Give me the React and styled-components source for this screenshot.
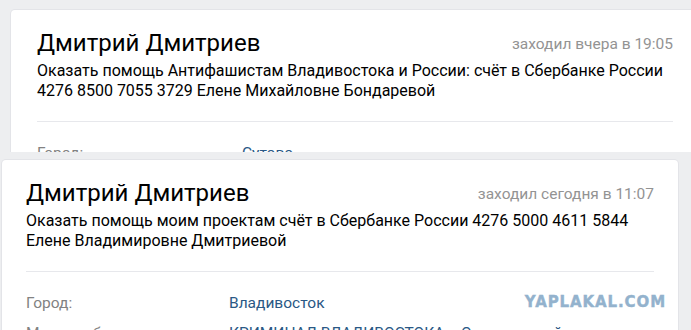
import React from "react";
import styled, { createGlobalStyle } from "styled-components";

const GlobalStyle = createGlobalStyle`
  html, body {
    margin: 0;
    padding: 0;
    background: #edeef0;
  }

  body {
    width: 691px;
    height: 330px;
    overflow: hidden;
    font-family: Roboto, "Open Sans", "DejaVu Sans", sans-serif;
    -webkit-font-smoothing: antialiased;
  }
`;

const Shot = styled.section`
  background: #edeef0;
  height: ${(props) => props.height}px;
  overflow: hidden;
  padding-top: ${(props) => props.top}px;
  padding-left: ${(props) => props.left}px;
  box-sizing: border-box;
`;

const Card = styled.div`
  position: relative;
  width: ${(props) => props.width}px;
  padding: 19px ${(props) => props.pad}px 0;
  box-sizing: border-box;
  background: #fff;
  border-radius: 4px;
  box-shadow: 0 1px 0 0 #d7d8db, 0 0 0 1px #e3e4e8;
  min-height: 220px;
`;

const Header = styled.div`
  display: flex;
  justify-content: space-between;
  align-items: flex-start;
`;

const Name = styled.h2`
  margin: 0;
  font-size: 24px;
  line-height: 28px;
  font-weight: 400;
  color: #000;
`;

const Online = styled.div`
  margin-top: 5px;
  font-size: 15.5px;
  line-height: 20px;
  color: #939393;
  white-space: nowrap;
`;

const Status = styled.div`
  margin-top: 4px;
  padding-bottom: 20px;
  font-size: 16px;
  line-height: 20px;
  color: #000;
  border-bottom: 1px solid #e7e8ec;
`;

const Info = styled.div`
  padding-top: 21px;
  display: flex;
  flex-direction: column;
  gap: 10px;
`;

const Row = styled.div`
  display: flex;
  font-size: 15.5px;
  line-height: 20px;
`;

const Label = styled.div`
  width: ${(props) => props.width}px;
  flex-shrink: 0;
  color: #828282;
`;

const Value = styled.a`
  color: #2a5885;
  text-decoration: none;
`;

const Watermark = styled.div`
  position: absolute;
  top: 133px;
  right: 12px;
  font-family: "DejaVu Sans", Verdana, sans-serif;
  font-weight: 900;
  font-size: 15px;
  letter-spacing: 0.9px;
  color: #93b2cd;
  -webkit-text-stroke: 0.4px #93b2cd;
`;

const Profile = ({ width, pad, labelWidth, online, lines, rows, watermark }) => (
  <Card width={width} pad={pad}>
    <Header>
      <Name>Дмитрий Дмитриев</Name>
      <Online>{online}</Online>
    </Header>
    <Status>
      {lines.map((line) => (
        <div key={line}>{line}</div>
      ))}
    </Status>
    <Info>
      {rows.map(([label, value]) => (
        <Row key={label}>
          <Label width={labelWidth}>{label}</Label>
          <Value href="#">{value}</Value>
        </Row>
      ))}
    </Info>
    {watermark && <Watermark>YAPLAKAL.COM</Watermark>}
  </Card>
);

export default function App() {
  return (
    <>
      <GlobalStyle />
      <Shot height={152} top={10} left={11}>
        <Profile
          width={688}
          pad={26}
          labelWidth={205}
          online="заходил вчера в 19:05"
          lines={[
            "Оказать помощь Антифашистам Владивостока и России: счёт в Сбербанке России",
            "4276 8500 7055 3729 Елене Михайловне Бондаревой",
          ]}
          rows={[["Город:", "Сутово"]]}
        />
      </Shot>
      <Shot height={178} top={8} left={2}>
        <Profile
          width={676}
          pad={24}
          labelWidth={203}
          online="заходил сегодня в 11:07"
          lines={[
            "Оказать помощь моим проектам счёт в Сбербанке России 4276 5000 4611 5844",
            "Елене Владимировне Дмитриевой",
          ]}
          rows={[
            ["Город:", "Владивосток"],
            ["Место работы:", "КРИМИНАЛ ВЛАДИВОСТОКА и Окрестностей"],
          ]}
          watermark
        />
      </Shot>
    </>
  );
}
